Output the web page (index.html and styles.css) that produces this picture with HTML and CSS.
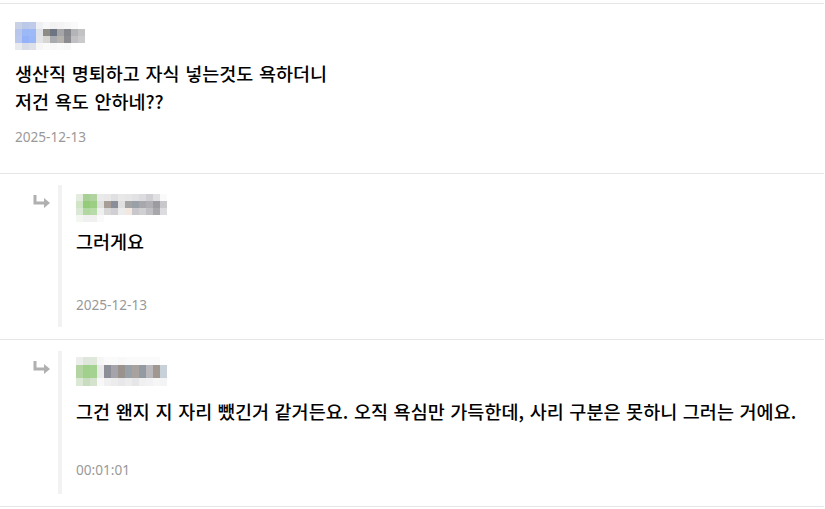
FILE: index.html
```html
<!DOCTYPE html>
<html lang="ko">
<head>
<meta charset="utf-8">
<link rel="stylesheet" href="styles.css">
</head>
<body>
<div class="list">
  <div class="comment">
    <div class="mosaic m1">
      <i style="background:#c9d1e6"></i><i style="background:#bcc8e8"></i><i style="background:#c0cbe9"></i><i style="background:#eef0f4"></i><i style="background:#f7f7f8"></i><i style="background:#f2f2f3"></i><i style="background:#f4f4f5"></i><i style="background:#f7f7f7"></i><i style="background:#fafafa"></i><i style="background:#fff"></i>
      <i style="background:#b8c6ec"></i><i style="background:#9cb8f6"></i><i style="background:#9cb9f8"></i><i style="background:#dfe2e8"></i><i style="background:#8e8a84"></i><i style="background:#6d7482"></i><i style="background:#a5a5a8"></i><i style="background:#86868d"></i><i style="background:#b4b4b6"></i><i style="background:#c2c2c5"></i>
      <i style="background:#bac8ee"></i><i style="background:#93b2f8"></i><i style="background:#9ab7f8"></i><i style="background:#e2e4e8"></i><i style="background:#d8d6d2"></i><i style="background:#a8aaae"></i><i style="background:#b6b2ae"></i><i style="background:#8c8c90"></i><i style="background:#c0c0c2"></i><i style="background:#cacacc"></i>
      <i style="background:#e8eaee"></i><i style="background:#d8dce6"></i><i style="background:#dee1e8"></i><i style="background:#f6f6f7"></i><i style="background:#fafafa"></i><i style="background:#f8f8f8"></i><i style="background:#fafafa"></i><i style="background:#f8f8f8"></i><i style="background:#fff"></i><i style="background:#fff"></i>
    </div>
    <div class="text">생산직 명퇴하고 자식 넣는것도 욕하더니<br>저건 욕도 안하네??</div>
    <div class="date">2025-12-13</div>
  </div>

  <div class="comment reply">
    <svg class="arrow" width="18" height="14" viewBox="0 0 18 14"><path d="M2 0 V8 H12" fill="none" stroke="#b0b0b0" stroke-width="3"/><path d="M11 3 L17 8 L11 13 Z" fill="#b0b0b0"/></svg>
    <div class="reply-box r1">
      <div class="mosaic m2">
        <i style="background:#e4ece0"></i><i style="background:#a8d095"></i><i style="background:#b0d3a0"></i><i style="background:#eaeaea"></i><i style="background:#e8e8e8"></i><i style="background:#e0e0e2"></i><i style="background:#e8e8e8"></i><i style="background:#e6e6e6"></i><i style="background:#e2e2e4"></i><i style="background:#dcdcde"></i><i style="background:#d0d0d4"></i><i style="background:#e0e0e2"></i><i style="background:#fafafa"></i>
        <i style="background:#d0e4c6"></i><i style="background:#94cc7a"></i><i style="background:#9ccf84"></i><i style="background:#e0e0e0"></i><i style="background:#a89e98"></i><i style="background:#8a8e98"></i><i style="background:#e0e0e0"></i><i style="background:#a4a4a4"></i><i style="background:#9aa0a8"></i><i style="background:#a8a8ac"></i><i style="background:#b0b0b4"></i><i style="background:#9c9ca0"></i><i style="background:#c8c8cc"></i>
        <i style="background:#dce8d6"></i><i style="background:#b0d8a0"></i><i style="background:#b8dca8"></i><i style="background:#f0f0f0"></i><i style="background:#d8d8d8"></i><i style="background:#d0d0d4"></i><i style="background:#ececec"></i><i style="background:#f2e8e0"></i><i style="background:#c8c8cc"></i><i style="background:#d0d0d2"></i><i style="background:#c0c0c4"></i><i style="background:#a8a8ac"></i><i style="background:#dcdce0"></i>
        <i style="background:#f4f6f2"></i><i style="background:#f0f0f0"></i><i style="background:#f0f0f0"></i><i style="background:#fafafa"></i><i style="background:#fff"></i><i style="background:#fff"></i><i style="background:#fff"></i><i style="background:#fff"></i><i style="background:#fff"></i><i style="background:#fff"></i><i style="background:#fff"></i><i style="background:#fff"></i><i style="background:#fff"></i>
      </div>
      <div class="text">그러게요</div>
      <div class="date">2025-12-13</div>
    </div>
  </div>

  <div class="comment reply">
    <svg class="arrow" width="18" height="14" viewBox="0 0 18 14"><path d="M2 0 V8 H12" fill="none" stroke="#b0b0b0" stroke-width="3"/><path d="M11 3 L17 8 L11 13 Z" fill="#b0b0b0"/></svg>
    <div class="reply-box r2">
      <div class="mosaic m3">
        <i style="background:#eceeec"></i><i style="background:#dfe6dc"></i><i style="background:#e0e8dc"></i><i style="background:#f6f6f6"></i><i style="background:#fafafa"></i><i style="background:#fafafa"></i><i style="background:#f8f8f8"></i><i style="background:#fafafa"></i><i style="background:#fafafa"></i><i style="background:#fafafa"></i><i style="background:#fafafa"></i><i style="background:#fafafa"></i><i style="background:#fff"></i>
        <i style="background:#b4d4a4"></i><i style="background:#a0d08c"></i><i style="background:#a4d290"></i><i style="background:#eaeaea"></i><i style="background:#8c8e98"></i><i style="background:#a4a4aa"></i><i style="background:#9a928c"></i><i style="background:#98a0a8"></i><i style="background:#a8a29e"></i><i style="background:#949aa2"></i><i style="background:#b8b8bc"></i><i style="background:#a09890"></i><i style="background:#c8d0d8"></i>
        <i style="background:#dce8d6"></i><i style="background:#c8dcc0"></i><i style="background:#d4e2ce"></i><i style="background:#f8f8f8"></i><i style="background:#f0f0f0"></i><i style="background:#ececec"></i><i style="background:#e8e8ea"></i><i style="background:#ececec"></i><i style="background:#e6e6e8"></i><i style="background:#f0f0f0"></i><i style="background:#f2f2f4"></i><i style="background:#f6f6f6"></i><i style="background:#f4f4f6"></i>
      </div>
      <div class="text">그건 왠지 지 자리 뺐긴거 같거든요. 오직 욕심만 가득한데, 사리 구분은 못하니 그러는 거에요.</div>
      <div class="date">00:01:01</div>
    </div>
  </div>
</div>
</body>
</html>
```

FILE: styles.css
```css
html, body {
  margin: 0;
  padding: 0;
  background: #fff;
}
body {
  padding-top: 3px;
  font-family: "Noto Sans CJK KR", "Noto Sans", sans-serif;
  color: #000;
}
.list {
  width: 824px;
  border-top: 1px solid #e6e6e6;
}
.comment {
  border-bottom: 1px solid #e6e6e6;
  padding: 18px 15px 27px;
}
.mosaic {
  display: grid;
  grid-auto-rows: 7px;
}
.mosaic i {
  display: block;
}
.m1 {
  grid-template-columns: repeat(10, 7px);
}
.m2 {
  grid-template-columns: repeat(13, 7px);
}
.m3 {
  grid-template-columns: repeat(13, 7px);
  grid-template-rows: 8px 13px 8px;
}
.text {
  font-size: 18.5px;
  font-weight: 500;
  line-height: 28px;
  margin-top: 9px;
  word-spacing: 0.5px;
}
.date {
  font-family: "Noto Sans", sans-serif;
  font-size: 13.6px;
  line-height: 18px;
  color: #999;
  margin-top: 13px;
}
.reply {
  display: flex;
  align-items: flex-start;
  padding: 11px 0 12px 33px;
}
.arrow {
  margin-top: 10px;
  flex: none;
}
.reply-box {
  margin-left: 7px;
  border-left: 4px solid #f2f2f2;
  padding: 9px 0 13px 14px;
  flex: 1;
}
.reply-box .text {
  margin-top: 5px;
}
.reply-box .date {
  margin-top: 41px;
}
.r2 {
  padding-top: 6px;
  padding-bottom: 15px;
}
.r2 .text {
  margin-top: 11px;
}
.r2 .date {
  margin-top: 36px;
}
```
